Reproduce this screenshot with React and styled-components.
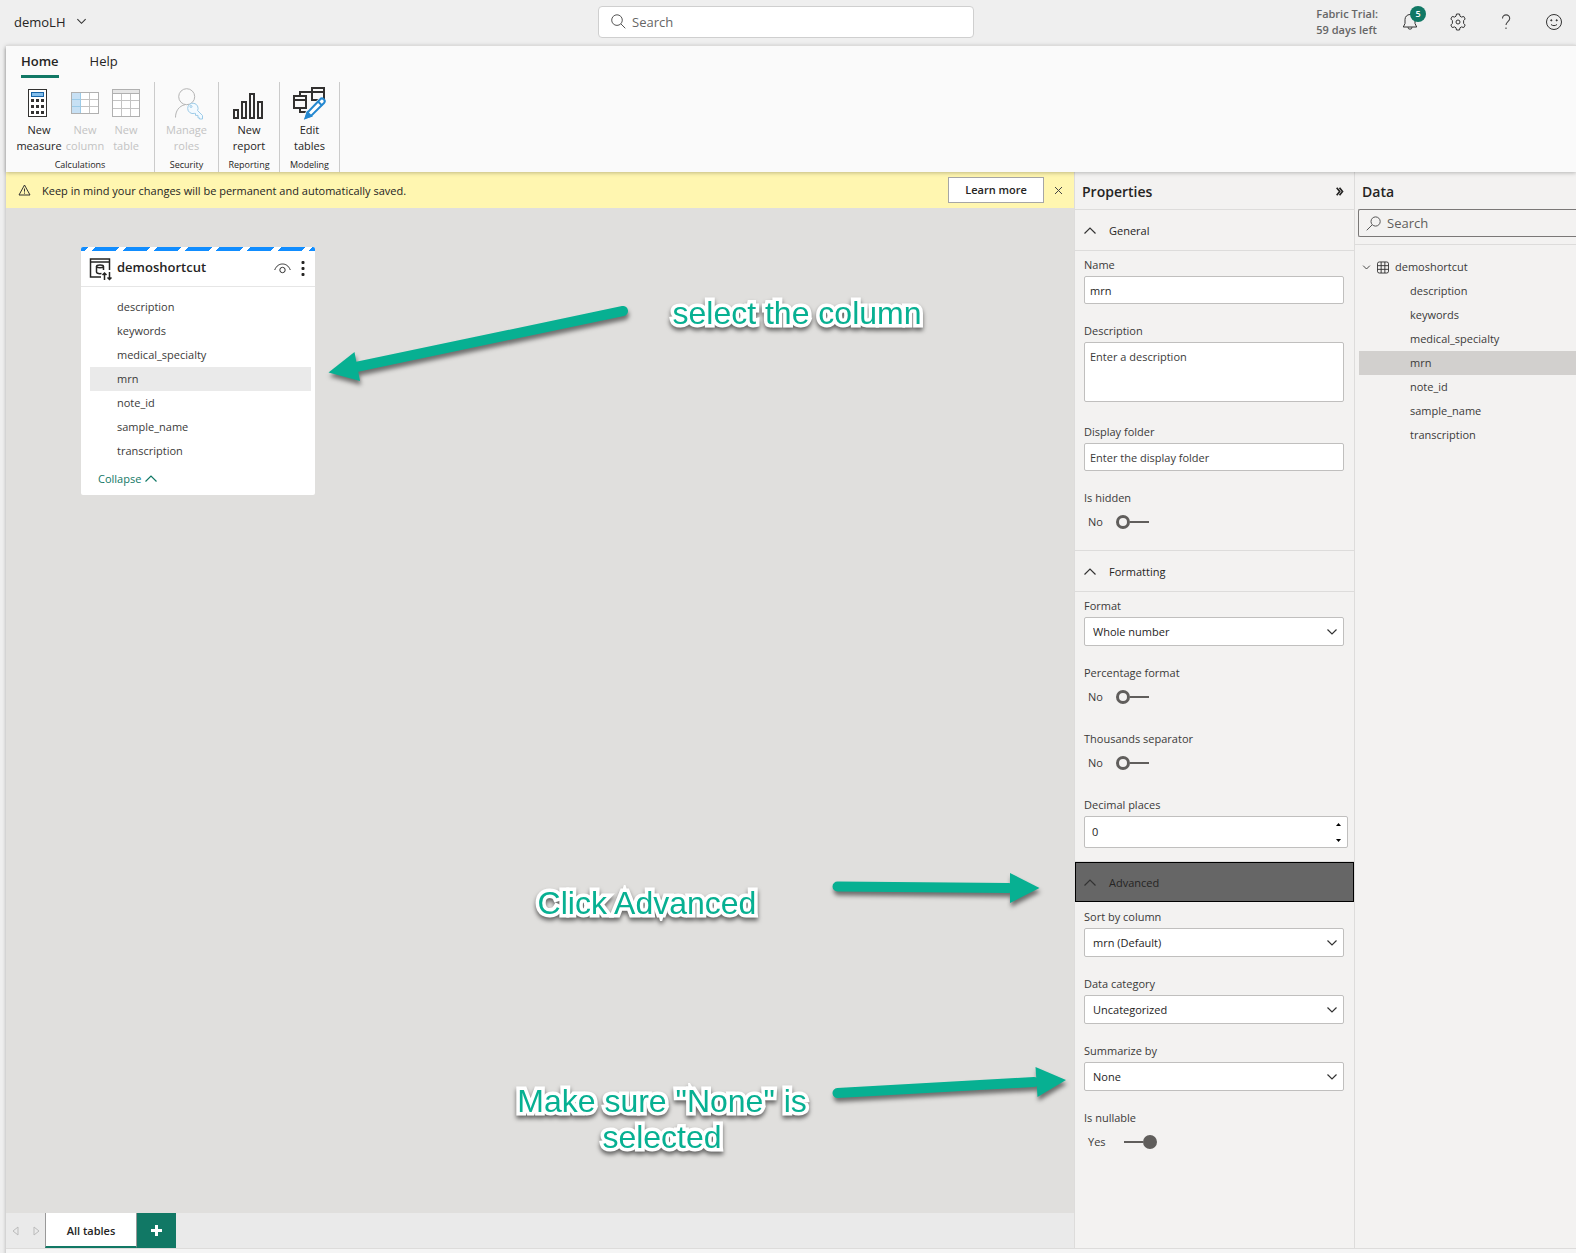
import React, { useState } from 'react';
import styled, { createGlobalStyle, ThemeProvider } from 'styled-components';

const theme = {
  green: '#117865',
  arrow: '#07b092',
  text: '#252423',
  textSoft: '#3b3a39',
  disabled: '#c3c3c3',
  line: '#dddcdb',
  control: '#c0bfbe',
  panel: '#f3f2f1',
  canvas: '#e0dfdd',
  warning: '#fff6b0',
  fs10: '9px',
  fs12: '11px',
  fs14: '13px',
  fs16: '14px',
};

const GlobalStyle = createGlobalStyle`
  *,
  *::before,
  *::after {
    box-sizing: border-box;
  }

  body {
    margin: 0;
    background: #efefef;
  }

  body, button, input, select, textarea {
    font-family: 'Open Sans', 'Noto Sans', sans-serif;
    font-size: 11px;
    line-height: 16px;
    color: #252423;
  }

  button {
    background: none;
    border: 0;
    padding: 0;
    cursor: pointer;
  }

  ul {
    list-style: none;
    margin: 0;
    padding: 0;
  }

  h2, h3, p {
    margin: 0;
  }

  svg {
    display: block;
    flex: none;
  }
`;

const Page = styled.div`
  display: flex;
  flex-direction: column;
  min-height: 100vh;
`;

/* ---------- top bar ---------- */

const TopBar = styled.header`
  display: grid;
  grid-template-columns: 1fr minmax(200px, 376px) 1fr;
  align-items: center;
  height: 45px;
  padding: 0 8px 2px 4px;
`;

const ModelName = styled.button`
  display: flex;
  align-items: center;
  justify-self: start;
  gap: 11px;
  padding: 0 10px;
  font-size: ${({ theme }) => theme.fs14};
`;

const GlobalSearch = styled.label`
  display: flex;
  align-items: center;
  gap: 6px;
  height: 32px;
  padding: 0 12px;
  background: #fff;
  border: 1px solid #cfcfcf;
  border-radius: 4px;

  input {
    flex: 1;
    min-width: 0;
    border: 0;
    outline: 0;
    padding: 0;
    font-size: ${({ theme }) => theme.fs14};
  }

  input::placeholder {
    color: #666;
    opacity: 1;
  }
`;

const TopActions = styled.div`
  display: flex;
  align-items: center;
  justify-content: flex-end;
  gap: 20px;
`;

const Trial = styled.p`
  font-weight: 600;
  color: #666;
  margin-right: -2px;
`;

const IconButton = styled.button`
  position: relative;
  display: flex;
  align-items: center;
  justify-content: center;
  width: 28px;
  height: 28px;
`;

const Badge = styled.span`
  position: absolute;
  top: -2px;
  right: -2px;
  width: 16px;
  height: 16px;
  border-radius: 50%;
  background: ${({ theme }) => theme.green};
  color: #fff;
  font-size: ${({ theme }) => theme.fs10};
  font-weight: 600;
  text-align: center;
`;

/* ---------- ribbon ---------- */

const Shell = styled.div`
  flex: 1;
  display: flex;
  flex-direction: column;
  margin-left: 6px;
  background: #f5f5f5;
  padding-bottom: 4px;
  box-shadow: -1px 3px 3px rgba(0, 0, 0, 0.18);
`;

const Ribbon = styled.div`
  position: relative;
  height: 127px;
  background: #fafafa;
  border-top: 1px solid ${({ theme }) => theme.line};
  box-shadow: 0 1px 4px rgba(0, 0, 0, 0.25);
`;

const RibbonTabs = styled.nav`
  display: flex;
  gap: 31px;
  padding: 5px 15px 0;
`;

const RibbonTab = styled.button`
  height: 27px;
  padding-bottom: 4px;
  font-size: ${({ theme }) => theme.fs14};
  font-weight: ${({ $active }) => ($active ? 600 : 400)};
  border-bottom: 3px solid
    ${({ $active, theme }) => ($active ? theme.green : 'transparent')};
`;

const RibbonGroups = styled.div`
  display: flex;
  padding-top: 4px;
`;

const Group = styled.section`
  display: flex;
  flex-direction: column;
  justify-content: space-between;
  width: ${({ $width }) => $width};
  height: 90px;
  border-right: 1px solid #cbcbcb;
`;

const GroupButtons = styled.div`
  display: flex;
  justify-content: center;
`;

const GroupLabel = styled.h3`
  font-size: ${({ theme }) => theme.fs10};
  font-weight: 400;
  line-height: 14px;
  text-align: center;
`;

const Tool = styled.button`
  display: flex;
  flex-direction: column;
  align-items: center;
  width: ${({ $width }) => $width};
  padding-top: 2px;

  &:disabled {
    color: ${({ theme }) => theme.disabled};
  }

  svg {
    margin-bottom: 2px;
  }
`;

/* ---------- workspace ---------- */

const Workspace = styled.div`
  flex: 1;
  display: grid;
  grid-template-columns: minmax(0, 1fr) 280px 222px;
  border-bottom: 1px solid ${({ theme }) => theme.line};
`;

const Main = styled.main`
  display: flex;
  flex-direction: column;
`;

const Notice = styled.div`
  display: flex;
  align-items: center;
  height: 36px;
  padding: 0 11px 0 12px;
  background: ${({ theme }) => theme.warning};

  p {
    flex: 1;
    margin-left: 11px;
    padding-top: 2px;
  }
`;

const LearnMore = styled.button`
  width: 96px;
  height: 26px;
  margin-right: 10px;
  background: #fff;
  border: 1px solid #a6a6a6;
  font-weight: 600;
`;

const Canvas = styled.div`
  position: relative;
  flex: 1;
  background: ${({ theme }) => theme.canvas};
`;

const Card = styled.article`
  position: absolute;
  top: 39px;
  left: 75px;
  width: 234px;
  background: #fff;
  border-radius: 2px;
  overflow: hidden;
`;

const CardStripe = styled.div`
  height: 4px;
  background: repeating-linear-gradient(
    135deg,
    #118dff 0 5px,
    #fff 5px 10px,
    #118dff 10px 22px
  );
`;

const CardHead = styled.div`
  display: flex;
  align-items: center;
  height: 36px;
  padding: 0 8px;
  border-bottom: 1px solid #e6e6e6;

  h3 {
    flex: 1;
    margin-left: 5px;
    padding-bottom: 3px;
    font-size: ${({ theme }) => theme.fs14};
    font-weight: 600;
  }
`;

const CardMenu = styled.button`
  margin-left: 8px;
  padding: 2px;
`;

const CardFields = styled.ul`
  padding: 8px 4px 0 9px;
`;

const Field = styled.li`
  height: 24px;
  line-height: 24px;
  padding-left: ${({ $indent }) => $indent};
  color: ${({ theme }) => theme.textSoft};
  background: ${({ $selected }) => $selected || 'transparent'};
`;

const Collapse = styled.button`
  display: flex;
  align-items: center;
  gap: 4px;
  height: 32px;
  padding-left: 17px;
  color: ${({ theme }) => theme.green};
`;

const Arrows = styled.svg`
  position: absolute;
  inset: 0;
  width: 100%;
  height: 100%;
  overflow: visible;
  pointer-events: none;
  filter: drop-shadow(1px 4px 2px rgba(0, 0, 0, 0.5));
`;

const Callout = styled.p`
  position: absolute;
  top: ${({ $top }) => $top};
  left: ${({ $left }) => $left};
  width: 300px;
  font: 32px/36px 'Liberation Sans', Arial, sans-serif;
  text-align: center;
  color: ${({ theme }) => theme.arrow};
  -webkit-text-stroke: 7px #fff;
  paint-order: stroke fill;
  stroke-linejoin: round;
  filter: drop-shadow(0 3px 2px rgba(0, 0, 0, 0.55));
`;

const PageTabs = styled.div`
  display: flex;
  height: 35px;
  background: #eaeaea;
`;

const PageNav = styled.div`
  display: flex;
  align-items: center;
  gap: 14px;
  width: 39px;
  padding-left: 6px;
`;

const PageTab = styled.button`
  width: 92px;
  padding-top: 2px;
  background: #fff;
  border-left: 1px solid #999;
  border-right: 1px solid #999;
  border-bottom: 2px solid ${({ theme }) => theme.green};
  font-weight: 600;
`;

const AddPage = styled.button`
  display: flex;
  align-items: center;
  justify-content: center;
  width: 39px;
  background: ${({ theme }) => theme.green};
`;

/* ---------- side panels ---------- */

const Panel = styled.aside`
  min-width: 0;
  background: ${({ theme }) => theme.panel};
  border-left: 1px solid ${({ theme }) => theme.line};
`;

const PanelHead = styled.div`
  display: flex;
  align-items: center;
  justify-content: space-between;
  height: 37px;
  padding: 2px 10px 0 7px;

  h2 {
    font-size: ${({ theme }) => theme.fs16};
    font-weight: 600;
  }
`;

const Section = styled.section`
  border-top: 1px solid ${({ theme }) => theme.line};
`;

const SectionHead = styled.button`
  display: flex;
  align-items: center;
  gap: 13px;
  width: 100%;
  height: 41px;
  padding: 2px 9px 0;
  border-bottom: 1px solid ${({ theme }) => theme.line};

  &[data-active='true'] {
    height: 40px;
    margin-bottom: 1px;
    padding: 2px 8px 0;
    background: #666;
    border: 1px solid #000;
  }
`;

const SectionBody = styled.div`
  display: flex;
  flex-direction: column;
  gap: 19px;
  padding: 6px 10px 13px 9px;
`;

const FormRow = styled.div`
  display: flex;
  flex-direction: column;
  gap: 3px;
  color: ${({ theme }) => theme.textSoft};
`;

const TextInput = styled.input`
  width: 100%;
  height: 28px;
  padding: 0 5px;
  background: #fff;
  border: 1px solid ${({ theme }) => theme.control};
  border-radius: 2px;

  &::placeholder {
    color: ${({ theme }) => theme.textSoft};
    opacity: 1;
  }
`;

const TextArea = styled(TextInput).attrs({ as: 'textarea' })`
  height: 60px;
  margin-bottom: 3px;
  padding: 6px 5px;
  resize: none;
`;

const SelectWrap = styled.div`
  display: grid;
  align-items: center;

  select,
  svg {
    grid-area: 1 / 1;
  }

  svg {
    justify-self: end;
    margin-right: 6px;
    pointer-events: none;
  }
`;

const Select = styled.select`
  appearance: none;
  width: 100%;
  height: 29px;
  padding: 0 8px;
  background: #fff;
  border: 1px solid ${({ theme }) => theme.control};
  border-radius: 2px;
`;

const Stepper = styled.div`
  display: flex;
  height: 32px;
  margin-right: -4px;
  background: #fff;
  border: 1px solid ${({ theme }) => theme.control};
  border-radius: 2px;

  input {
    flex: 1;
    min-width: 0;
    padding: 0 7px;
    border: 0;
    outline: 0;
    background: none;
    appearance: textfield;
  }

  input::-webkit-inner-spin-button {
    appearance: none;
  }
`;

const StepButtons = styled.div`
  display: flex;
  flex-direction: column;
  justify-content: space-between;
  padding: 5px 6px;

  button {
    height: 4px;
  }
`;

const SwitchRow = styled.div`
  display: flex;
  align-items: center;
  gap: 13px;
  height: 28px;
  padding: 0 0 2px 4px;
`;

const Switch = styled.input`
  appearance: none;
  display: flex;
  align-items: center;
  width: 33px;
  height: 14px;
  margin: 0;

  &::before {
    content: '';
    width: 14px;
    height: 14px;
    border: 3px solid #605e5c;
    border-radius: 50%;
  }

  &::after {
    content: '';
    flex: 1;
    height: 2px;
    background: #605e5c;
  }

  &:checked {
    flex-direction: row-reverse;
    margin-left: 5px;
  }

  &:checked::before {
    background: #605e5c;
  }
`;

const DataSearch = styled.label`
  display: flex;
  align-items: center;
  gap: 6px;
  height: 28px;
  margin-left: 3px;
  padding-left: 7px;
  border: 1px solid #7a7877;
  border-right: 0;
  border-radius: 2px 0 0 2px;

  input {
    flex: 1;
    min-width: 0;
    padding: 0;
    border: 0;
    outline: 0;
    background: none;
    font-size: ${({ theme }) => theme.fs14};
  }

  input::placeholder {
    color: #605e5c;
    opacity: 1;
  }
`;

const Tree = styled.div`
  margin-top: 7px;
  padding: 10px 0 0 4px;
  border-top: 1px solid ${({ theme }) => theme.line};
`;

const TreeRoot = styled.button`
  display: flex;
  align-items: center;
  gap: 6px;
  height: 24px;
  padding-left: 3px;
  color: ${({ theme }) => theme.textSoft};
`;

/* ---------- icons ---------- */

const Chevron = ({ size = 12, up, color = '#333' }) => (
  <svg width={size} height={size} viewBox="0 0 12 12" fill="none" stroke={color}>
    <path d={up ? 'M.5 8.5 6 3l5.5 5.5' : 'M1.500 3.500 6 8l4.500-4.500'} strokeWidth="1.200" />
  </svg>
);

const Magnifier = ({ flip }) => (
  <svg width="15" height="15" viewBox="0 0 15 15" fill="none" stroke="#555">
    {flip ? (
      <path d="M6 9 .7 14.300M9.600.9a4.600 4.600 0 1 1 0 9.200 4.600 4.600 0 0 1 0-9.200z" />
    ) : (
      <path d="M9.900 9.900l4.400 4.400M6 .8a5.300 5.300 0 1 1 0 10.600A5.300 5.300 0 0 1 6 .8z" />
    )}
  </svg>
);

const BellIcon = () => (
  <svg width="16" height="18" viewBox="0 0 16 18" fill="none" stroke="#333">
    <path d="M8 1.500c-3 0-5 2.300-5 5v4L1.300 14h13.400L13 10.500v-4c0-2.700-2-5-5-5z" />
    <path d="M6 14.200a2 2 0 0 0 4 0" />
  </svg>
);

const GearIcon = () => (
  <svg width="18" height="18" viewBox="0 0 18 18" fill="none" stroke="#333" strokeLinejoin="round">
    <path d="M7.500 1h3l.500 2.200 1.500.9 2.200-.7 1.500 2.600L14.600 7.600v2.800l1.600 1.600-1.500 2.600-2.200-.7-1.500.9-.5 2.200h-3L7 14.800l-1.500-.9-2.200.7L1.800 12l1.600-1.600V7.600L1.800 6l1.500-2.600 2.200.7L7 3.200z" />
    <circle cx="9" cy="9" r="2" />
  </svg>
);

const HelpIcon = () => (
  <svg width="18" height="18" viewBox="0 0 18 18" fill="none" stroke="#444" strokeWidth="1.100">
    <path d="M5.500 5.500a3.600 3.600 0 0 1 7.200 0c0 3-3.700 3.200-3.700 6.500" />
    <path d="M9 14.500v1.500" />
  </svg>
);

const SmileIcon = () => (
  <svg width="18" height="18" viewBox="0 0 18 18" fill="none" stroke="#333">
    <circle cx="9" cy="9" r="7.500" />
    <path d="M6 11.500c1.700 1.500 4.300 1.500 6 0" />
    <circle cx="6.300" cy="7.300" r=".6" fill="#333" />
    <circle cx="11.700" cy="7.300" r=".6" fill="#333" />
  </svg>
);

const CalculatorIcon = () => (
  <svg width="32" height="36" viewBox="0 0 32 36">
    <rect x="5.500" y="5.500" width="18" height="27" fill="#fff" stroke="#323130" />
    <rect x="8.500" y="8.500" width="12" height="4" fill="#83beec" stroke="#1664a7" />
    {[15, 21, 27].map((y) =>
      [8, 13, 18].map((x) => (
        <rect key={`${x}-${y}`} x={x} y={y} width="3" height="3" fill="#323130" />
      ))
    )}
  </svg>
);

const ColumnIcon = () => (
  <svg width="32" height="36" viewBox="0 0 32 36" fill="none" stroke="#c3c3c3">
    <rect x="2.500" y="8.500" width="27" height="21" fill="#fff" />
    <path d="M20.500 8.500v21M11.500 15.500h18M11.500 22.500h18" />
    <path d="M2.500 8.500h9v21h-9zM2.500 15.500h9M2.500 22.500h9" fill="#c7e0f4" stroke="#9ccbe8" />
    <rect x="2.500" y="8.500" width="27" height="21" stroke="#b0b0b0" />
  </svg>
);

const TableIcon = () => (
  <svg width="32" height="36" viewBox="0 0 32 36" fill="none" stroke="#c3c3c3">
    <rect x="2.500" y="5.500" width="27" height="27" fill="#fff" />
    <path d="M11.500 9.500v23M20.500 9.500v23M2.500 16.500h27M2.500 24.500h27" />
    <rect x="2.500" y="5.500" width="27" height="4" fill="#e6e6e6" stroke="#b0b0b0" />
    <rect x="2.500" y="5.500" width="27" height="27" stroke="#b0b0b0" />
  </svg>
);

const RolesIcon = () => (
  <svg width="32" height="36" viewBox="0 0 32 36" fill="none" stroke="#b5b5b5">
    <circle cx="15.700" cy="12.700" r="8" />
    <path d="M4.500 33.500C4.500 27 8 22 14 20.700" />
    <g stroke="#9ccbe8" fill="#f3faff">
      <path d="M26.600 26.600a5.200 5.200 0 1 0-3.300 2.800h1.200v2h2.500v2.500h1.500v1.100h3v-3.500z" />
      <circle cx="20" cy="22.500" r="1" />
    </g>
  </svg>
);

const ReportIcon = () => (
  <svg width="32" height="36" viewBox="0 0 32 36" fill="none" stroke="#323130" strokeWidth="2">
    <path d="M1 26h4v8H1zM9 18h4v16H9zM17 10h4v24h-4zM25 18h4v16h-4z" />
  </svg>
);

const EditTablesIcon = () => (
  <svg width="36" height="36" viewBox="0 0 36 36" fill="none" stroke="#323130" strokeWidth="2">
    <path d="M20 4h12v12H20zM20 8h12M20 8H8v4" />
    <path d="M2 12h12v12H2zM2 16h12M8 24v4h6" />
    <path d="M28.500 15.500l3.500 3.500-13 13-5.500 2 2-5.500z" stroke="#fafafa" strokeWidth="4" />
    <path d="M28 15.500a2.500 2.500 0 0 1 4 3.500L19 32l-5.500 2 2-5.500z" fill="#fff" stroke="#2488d0" />
    <path d="M14 33.500l1.500-5 3.500 3.500zM26 17.500l4 4" fill="#2488d0" stroke="#2488d0" />
  </svg>
);

const WarningIcon = () => (
  <svg width="13" height="12" viewBox="0 0 13 12" fill="none" stroke="#333">
    <path d="M6.500 1 12 11H1zM6.500 4.500v3.200M6.500 8.500v1.200" />
  </svg>
);

const CloseIcon = () => (
  <svg width="9" height="9" viewBox="0 0 9 9" stroke="#444">
    <path d="M1 1l7 7M8 1 1 8" />
  </svg>
);

const StoreIcon = () => (
  <svg width="23" height="24" viewBox="0 0 23 24" fill="none" stroke="#252423">
    <path d="M12 20H1.500V2h19v11M1.500 5h19" strokeWidth="1.500" />
    <path d="M12.500 16.500C9 17 7.500 16 7.500 15V9.500" strokeWidth="1.500" />
    <path d="M7.500 9.500c0-2 7-2 7 0v3.500M7.500 9.500c0 1.500 7 1.500 7 0" strokeWidth="1.500" />
    <path d="M15.500 23v-7M13.500 18l2-2 2 2M20.500 15v7.500M18.500 20.500l2 2 2-2" strokeWidth="1.500" />
  </svg>
);

const EyeIcon = () => (
  <svg width="17" height="12" viewBox="0 0 17 12" fill="none" stroke="#333">
    <path d="M.7 7C2.500 2.500 5.500 1 8.500 1S14.500 2.500 16.300 7" />
    <circle cx="8.500" cy="7" r="2.700" />
  </svg>
);

const DotsIcon = () => (
  <svg width="4" height="16" viewBox="0 0 4 16" fill="#252423">
    <rect x=".5" y="0" width="3" height="3" rx="1" />
    <rect x=".5" y="6" width="3" height="3" rx="1" />
    <rect x=".5" y="12" width="3" height="3" rx="1" />
  </svg>
);

const GridIcon = () => (
  <svg width="12" height="13" viewBox="0 0 13 13" fill="none" stroke="#333">
    <rect x=".5" y=".5" width="12" height="12" rx="2" />
    <path d="M4.500.5v12M8.500.5v12M.5 4.500h12M.5 8.500h12" />
  </svg>
);

const ExpandIcon = () => (
  <svg width="8" height="9" viewBox="0 0 8 9" fill="none" stroke="#252423" strokeWidth="1.700">
    <path d="M.7.700l3 3.800-3 3.800M3.500.700l3 3.800-3 3.800" />
  </svg>
);

/* ---------- data ---------- */

const fields = [
  'description',
  'keywords',
  'medical_specialty',
  'mrn',
  'note_id',
  'sample_name',
  'transcription',
];

const groups = [
  {
    label: 'Calculations',
    width: '149px',
    tools: [
      { lines: ['New', 'measure'], width: '48px', Icon: CalculatorIcon },
      { lines: ['New', 'column'], width: '44px', Icon: ColumnIcon, disabled: true },
      { lines: ['New', 'table'], width: '38px', Icon: TableIcon, disabled: true },
    ],
  },
  {
    label: 'Security',
    width: '64px',
    tools: [{ lines: ['Manage', 'roles'], width: '60px', Icon: RolesIcon, disabled: true }],
  },
  {
    label: 'Reporting',
    width: '61px',
    tools: [{ lines: ['New', 'report'], width: '60px', Icon: ReportIcon }],
  },
  {
    label: 'Modeling',
    width: '60px',
    tools: [{ lines: ['Edit', 'tables'], width: '58px', Icon: EditTablesIcon }],
  },
];

/* ---------- form parts ---------- */

const SelectField = ({ id, label, value }) => (
  <FormRow>
    <label htmlFor={id}>{label}</label>
    <SelectWrap>
      <Select id={id} defaultValue={value}>
        <option>{value}</option>
      </Select>
      <Chevron />
    </SelectWrap>
  </FormRow>
);

const SwitchField = ({ id, label, initial = false }) => {
  const [on, setOn] = useState(initial);

  return (
    <FormRow>
      <label htmlFor={id}>{label}</label>
      <SwitchRow>
        <span>{on ? 'Yes' : 'No'}</span>
        <Switch
          id={id}
          type="checkbox"
          checked={on}
          onChange={(e) => setOn(e.target.checked)}
        />
      </SwitchRow>
    </FormRow>
  );
};

const PropertySection = ({ title, active, children }) => (
  <Section>
    <SectionHead data-active={active}>
      <Chevron up />
      {title}
    </SectionHead>
    <SectionBody>{children}</SectionBody>
  </Section>
);

const Properties = () => {
  const [places, setPlaces] = useState(0);

  return (
    <Panel>
      <PanelHead>
        <h2>Properties</h2>
        <button aria-label="Collapse pane">
          <ExpandIcon />
        </button>
      </PanelHead>

      <PropertySection title="General">
        <FormRow>
          <label htmlFor="name">Name</label>
          <TextInput id="name" defaultValue="mrn" />
        </FormRow>
        <FormRow>
          <label htmlFor="description">Description</label>
          <TextArea id="description" placeholder="Enter a description" />
        </FormRow>
        <FormRow>
          <label htmlFor="folder">Display folder</label>
          <TextInput id="folder" placeholder="Enter the display folder" />
        </FormRow>
        <SwitchField id="hidden" label="Is hidden" />
      </PropertySection>

      <PropertySection title="Formatting">
        <SelectField id="format" label="Format" value="Whole number" />
        <SwitchField id="percentage" label="Percentage format" />
        <SwitchField id="thousands" label="Thousands separator" />
        <FormRow>
          <label htmlFor="places">Decimal places</label>
          <Stepper>
            <input
              id="places"
              type="number"
              value={places}
              onChange={(e) => setPlaces(Number(e.target.value))}
            />
            <StepButtons>
              <button aria-label="Increase" onClick={() => setPlaces(places + 1)}>
                <svg width="5" height="3" viewBox="0 0 5 3">
                  <path d="M0 3h5L2.500 0z" />
                </svg>
              </button>
              <button aria-label="Decrease" onClick={() => setPlaces(places - 1)}>
                <svg width="5" height="3" viewBox="0 0 5 3">
                  <path d="M0 0h5L2.500 3z" />
                </svg>
              </button>
            </StepButtons>
          </Stepper>
        </FormRow>
      </PropertySection>

      <PropertySection title="Advanced" active>
        <SelectField id="sort" label="Sort by column" value="mrn (Default)" />
        <SelectField id="category" label="Data category" value="Uncategorized" />
        <SelectField id="summarize" label="Summarize by" value="None" />
        <SwitchField id="nullable" label="Is nullable" initial />
      </PropertySection>
    </Panel>
  );
};

const App = () => (
  <ThemeProvider theme={theme}>
    <GlobalStyle />
    <Page>
      <TopBar>
        <ModelName>
          demoLH
          <Chevron size={11} />
        </ModelName>
        <GlobalSearch>
          <Magnifier />
          <input type="text" placeholder="Search" aria-label="Search" />
        </GlobalSearch>
        <TopActions>
          <Trial>
            Fabric Trial:
            <br />
            59 days left
          </Trial>
          <IconButton aria-label="Notifications">
            <BellIcon />
            <Badge>5</Badge>
          </IconButton>
          <IconButton aria-label="Settings">
            <GearIcon />
          </IconButton>
          <IconButton aria-label="Help">
            <HelpIcon />
          </IconButton>
          <IconButton aria-label="Feedback">
            <SmileIcon />
          </IconButton>
        </TopActions>
      </TopBar>

      <Shell>
        <Ribbon>
          <RibbonTabs>
            <RibbonTab $active>Home</RibbonTab>
            <RibbonTab>Help</RibbonTab>
          </RibbonTabs>
          <RibbonGroups>
            {groups.map(({ label, width, tools }) => (
              <Group key={label} $width={width}>
                <GroupButtons>
                  {tools.map(({ lines, width: toolWidth, Icon, disabled }) => (
                    <Tool key={lines[1]} $width={toolWidth} disabled={disabled}>
                      <Icon />
                      <span>{lines[0]}</span>
                      <span>{lines[1]}</span>
                    </Tool>
                  ))}
                </GroupButtons>
                <GroupLabel>{label}</GroupLabel>
              </Group>
            ))}
          </RibbonGroups>
        </Ribbon>

        <Workspace>
          <Main>
            <Notice>
              <WarningIcon />
              <p>
                Keep in mind your changes will be permanent and automatically
                saved.
              </p>
              <LearnMore>Learn more</LearnMore>
              <button aria-label="Dismiss">
                <CloseIcon />
              </button>
            </Notice>

            <Canvas>
              <Card>
                <CardStripe />
                <CardHead>
                  <StoreIcon />
                  <h3>demoshortcut</h3>
                  <EyeIcon />
                  <CardMenu aria-label="More options">
                    <DotsIcon />
                  </CardMenu>
                </CardHead>
                <CardFields>
                  {fields.map((field) => (
                    <Field
                      key={field}
                      $indent="27px"
                      $selected={field === 'mrn' && '#eaeaea'}
                    >
                      {field}
                    </Field>
                  ))}
                </CardFields>
                <Collapse>
                  Collapse
                  <Chevron up color="#117865" />
                </Collapse>
              </Card>

              <Arrows fill={theme.arrow} stroke={theme.arrow} strokeLinecap="round">
                <path d="M617 103 350 159" strokeWidth="10" />
                <path d="M322.500 164.500 348.500 144 354 173z" stroke="none" />
                <path d="M831.500 678.500 1003 680" strokeWidth="10" />
                <path d="M1033.500 680 1004 665v30z" stroke="none" />
                <path d="M831.500 885 1028 874" strokeWidth="10" />
                <path d="M1060 872 1029.500 859 1031.500 889z" stroke="none" />
              </Arrows>
              <Callout $top="87px" $left="641px">
                select the column
              </Callout>
              <Callout $top="677px" $left="491px">
                Click Advanced
              </Callout>
              <Callout $top="875px" $left="506px">
                Make sure "None" is selected
              </Callout>
            </Canvas>

            <PageTabs>
              <PageNav>
                <button aria-label="Previous page">
                  <svg width="7" height="10" viewBox="0 0 7 10" fill="none" stroke="#bbb">
                    <path d="M6 1v8L1 5z" />
                  </svg>
                </button>
                <button aria-label="Next page">
                  <svg width="7" height="10" viewBox="0 0 7 10" fill="none" stroke="#bbb">
                    <path d="M1 1v8l5-4z" />
                  </svg>
                </button>
              </PageNav>
              <PageTab>All tables</PageTab>
              <AddPage aria-label="Add page">
                <svg width="11" height="11" viewBox="0 0 11 11" stroke="#fff" strokeWidth="3">
                  <path d="M5.500 0v11M0 5.500h11" />
                </svg>
              </AddPage>
            </PageTabs>
          </Main>

          <Properties />

          <Panel>
            <PanelHead>
              <h2>Data</h2>
            </PanelHead>
            <DataSearch>
              <Magnifier flip />
              <input type="text" placeholder="Search" aria-label="Search data" />
            </DataSearch>
            <Tree>
              <TreeRoot>
                <Chevron size={9} />
                <GridIcon />
                demoshortcut
              </TreeRoot>
              <ul>
                {fields.map((field) => (
                  <Field
                    key={field}
                    $indent="51px"
                    $selected={field === 'mrn' && '#d2d0ce'}
                  >
                    {field}
                  </Field>
                ))}
              </ul>
            </Tree>
          </Panel>
        </Workspace>
      </Shell>
    </Page>
  </ThemeProvider>
);

export default App;
